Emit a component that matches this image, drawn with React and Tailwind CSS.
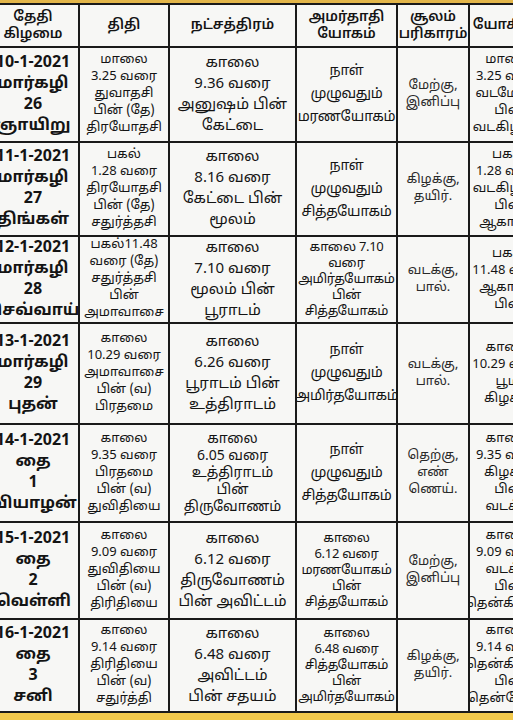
import React from 'react';

const rows = [
  {
    h: 'h-[95px]',
    date: ['10-1-2021', 'மார்கழி', '26', 'ஞாயிறு'],
    thithi: ['மாலை', '3.25 வரை', 'துவாதசி', 'பின் (தே)', 'திரயோதசி'],
    star: ['காலை', '9.36 வரை', 'அனுஷம் பின்', 'கேட்டை'],
    yogam: ['நாள்', 'முழுவதும்', 'மரணயோகம்'],
    soolam: ['மேற்கு,', 'இனிப்பு'],
    last: ['மாலை', '3.25 வரை', 'வடமேற்கு', 'பின்', 'வடகிழக்கு'],
  },
  {
    h: 'h-[94px]',
    date: ['11-1-2021', 'மார்கழி', '27', 'திங்கள்'],
    thithi: ['பகல்', '1.28 வரை', 'திரயோதசி', 'பின் (தே)', 'சதுர்த்தசி'],
    star: ['காலை', '8.16 வரை', 'கேட்டை பின்', 'மூலம்'],
    yogam: ['நாள்', 'முழுவதும்', 'சித்தயோகம்'],
    soolam: ['கிழக்கு,', 'தயிர்.'],
    last: ['பகல்', '1.28 வரை', 'வடகிழக்கு', 'பின்', 'ஆகாயம்'],
  },
  {
    h: 'h-[87px]',
    date: ['12-1-2021', 'மார்கழி', '28', 'செவ்வாய்'],
    thithi: ['பகல்11.48', 'வரை (தே)', 'சதுர்த்தசி', 'பின்', 'அமாவாசை'],
    star: ['காலை', '7.10 வரை', 'மூலம் பின்', 'பூராடம்'],
    yogam: ['காலை 7.10', 'வரை', 'அமிர்தயோகம்', 'பின்', 'சித்தயோகம்'],
    soolam: ['வடக்கு,', 'பால்.'],
    last: ['பகல்', '11.48 வரை', 'ஆகாயம்', 'பின்'],
  },
  {
    h: 'h-[101px]',
    date: ['13-1-2021', 'மார்கழி', '29', 'புதன்'],
    thithi: ['காலை', '10.29 வரை', 'அமாவாசை', 'பின் (வ)', 'பிரதமை'],
    star: ['காலை', '6.26 வரை', 'பூராடம் பின்', 'உத்திராடம்'],
    yogam: ['நாள்', 'முழுவதும்', 'அமிர்தயோகம்'],
    soolam: ['வடக்கு,', 'பால்.'],
    last: ['காலை', '10.29 வரை', 'பூமி', 'கிழக்கு'],
  },
  {
    h: 'h-[98px]',
    date: ['14-1-2021', 'தை', '1', 'வியாழன்'],
    thithi: ['காலை', '9.35 வரை', 'பிரதமை', 'பின் (வ)', 'துவிதியை'],
    star: ['காலை', '6.05 வரை', 'உத்திராடம்', 'பின்', 'திருவோணம்'],
    yogam: ['நாள்', 'முழுவதும்', 'சித்தயோகம்'],
    soolam: ['தெற்கு,', 'எண்', 'ணெய்.'],
    last: ['காலை', '9.35 வரை', 'கிழக்கு', 'பின்', 'வடக்கு'],
  },
  {
    h: 'h-[97px]',
    date: ['15-1-2021', 'தை', '2', 'வெள்ளி'],
    thithi: ['காலை', '9.09 வரை', 'துவிதியை', 'பின் (வ)', 'திரிதியை'],
    star: ['காலை', '6.12 வரை', 'திருவோணம்', 'பின் அவிட்டம்'],
    yogam: ['காலை', '6.12 வரை', 'மரணயோகம்', 'பின்', 'சித்தயோகம்'],
    soolam: ['மேற்கு,', 'இனிப்பு'],
    last: ['காலை', '9.09 வரை', 'வடக்கு', 'பின்', 'தென்கிழக்கு'],
  },
  {
    h: 'h-[93px]',
    date: ['16-1-2021', 'தை', '3', 'சனி'],
    thithi: ['காலை', '9.14 வரை', 'திரிதியை', 'பின் (வ)', 'சதுர்த்தி'],
    star: ['காலை', '6.48 வரை', 'அவிட்டம்', 'பின் சதயம்'],
    yogam: ['காலை', '6.48 வரை', 'சித்தயோகம்', 'பின்', 'அமிர்தயோகம்'],
    soolam: ['கிழக்கு,', 'தயிர்.'],
    last: ['காலை', '9.14 வரை', 'தென்கிழக்கு', 'பின்', 'தென்மேற்கு'],
  },
];

const cols = 'grid grid-cols-[92px_90px_127px_101px_72px_80px]';

const Cell = ({ lines, className = '' }) => (
  <div className={`flex flex-col items-center justify-center border-r-2 border-[#1a1a1a] text-center overflow-hidden ${className}`}>
    {lines.map((l, i) => (
      <span key={i} className="whitespace-nowrap">{l}</span>
    ))}
  </div>
);

export default function App() {
  return (
    <div className="w-[513px] h-[720px] overflow-hidden bg-[#f7f7f5] text-[#141414] flex flex-col" style={{ fontFamily: '"Noto Sans Tamil", "Noto Sans", "Liberation Sans", sans-serif' }}>
      <div className="h-[3px] bg-[#e3b64a] shrink-0" />
      <div className="ml-[-12px] w-[600px] flex flex-col border-t-2 border-[#1a1a1a]">
        <div className={`${cols} h-[43px] border-b-2 border-[#1a1a1a] text-[14px] leading-[17px] font-semibold`}>
          <Cell lines={['தேதி', 'கிழமை']} />
          <Cell lines={['திதி']} />
          <Cell lines={['நட்சத்திரம்']} />
          <Cell lines={['அமர்தாதி', 'யோகம்']} />
          <Cell lines={['சூலம்', 'பரிகாரம்']} />
          <Cell lines={['யோகினி']} className="border-r-0" />
        </div>
        {rows.map((r, i) => (
          <div key={i} className={`${cols} ${r.h} border-b-2 border-[#1a1a1a] text-[14px]`}>
            <Cell lines={r.date} className="font-bold text-[16px] leading-[21px]" />
            <Cell lines={r.thithi} className="text-[13px] leading-[17px]" />
            <Cell
              lines={r.star}
              className={r.star.length > 4 ? 'text-[14px] leading-[17px]' : 'text-[15px] leading-[21px]'}
            />
            <Cell
              lines={r.yogam}
              className={r.yogam.length > 3 ? 'text-[13px] leading-[16px] tracking-[-0.3px]' : 'text-[14px] leading-[23px] tracking-[-0.3px]'}
            />
            <Cell lines={r.soolam} className="text-[13px] leading-[17px] text-[#2a2a2a]" />
            <Cell lines={r.last} className="border-r-0 text-[13px] leading-[17px]" />
          </div>
        ))}
      </div>
      <div className="flex-1 bg-[#f2c94c]" />
    </div>
  );
}
